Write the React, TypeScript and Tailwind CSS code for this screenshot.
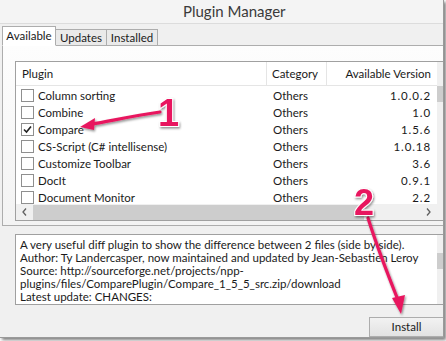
const plugins = [
  { name: "Column sorting", version: "1.0.0.2", checked: false },
  { name: "Combine", version: "1.0", checked: false },
  { name: "Compare", version: "1.5.6", checked: true },
  { name: "CS-Script (C# intellisense)", version: "1.0.18", checked: false },
  { name: "Customize Toolbar", version: "3.6", checked: false },
  { name: "DocIt", version: "0.9.1", checked: false },
  { name: "Document Monitor", version: "2.2", checked: false },
];

const font = { fontFamily: 'Lato, "Open Sans", sans-serif' };

function Checkbox({ checked }: { checked: boolean }) {
  return (
    <div className="w-[13px] h-[13px] border border-[#8f8f8f] bg-white flex items-center justify-center shrink-0">
      {checked && (
        <svg width="9" height="9" viewBox="0 0 9 9">
          <path d="M1 4.5 L3.5 7 L8 1.5" fill="none" stroke="#222" strokeWidth="1.6" />
        </svg>
      )}
    </div>
  );
}

function Annotations() {
  return (
    <svg className="absolute inset-0 pointer-events-none" width="446" height="341" viewBox="0 0 446 341">
      <defs>
        <filter id="sh" x="-20%" y="-20%" width="140%" height="140%">
          <feDropShadow dx="1" dy="1.5" stdDeviation="1.2" floodColor="#000" floodOpacity="0.45" />
        </filter>
      </defs>
      {/* arrow 1 */}
      <g filter="url(#sh)">
        <path d="M160 112 C 132 116, 110 121, 92 124" fill="none" stroke="#e8185f" strokeWidth="3.2" strokeLinecap="round" />
        <path d="M80 127 L95 118 L94 130 Z" fill="#e8185f" />
      </g>
      <text x="158" y="126" fontFamily="Liberation Sans, Arial, sans-serif" fontWeight="bold" fontSize="38" fill="#e8185f" stroke="#fff" strokeWidth="2" paintOrder="stroke" filter="url(#sh)">1</text>
      {/* arrow 2 */}
      <g filter="url(#sh)">
        <path d="M368 218 C 378 250, 390 280, 398 300" fill="none" stroke="#e8185f" strokeWidth="3.2" strokeLinecap="round" />
        <path d="M401 314 L392 298 L405 295 Z" fill="#e8185f" />
      </g>
      <text x="354" y="215" fontFamily="Liberation Sans, Arial, sans-serif" fontWeight="bold" fontSize="36" fill="#e8185f" stroke="#fff" strokeWidth="2" paintOrder="stroke" filter="url(#sh)">2</text>
    </svg>
  );
}

export default function App() {
  return (
    <div className="relative w-[446px] h-[341px] overflow-hidden bg-white" style={font}>
      <div className="w-[444px] h-[338px] bg-[#f0f0f0] border-r border-b border-[#9a9a9a] shadow-[2px_2px_3px_rgba(0,0,0,0.5)] flex flex-col text-[11.5px] text-[#1a1a1a] whitespace-nowrap">
        {/* title bar */}
        <div className="h-[24px] bg-[#f4f4f4] border-b border-[#dcdcdc] flex items-center pl-[183px] text-[15px] text-[#3a3a3a] leading-none">
          Plugin Manager
        </div>

        {/* tabs */}
        <div className="flex items-end pl-[2px] mt-[3px] h-[19px] relative z-10">
          <div className="w-[54px] h-[20px] bg-white border border-[#adadad] border-b-white flex items-center justify-center">Available</div>
          <div className="w-[51px] h-[17px] bg-[#eaeaea] border border-l-0 border-[#adadad] flex items-center justify-center">Updates</div>
          <div className="w-[51px] h-[17px] bg-[#eaeaea] border border-l-0 border-[#adadad] flex items-center justify-center">Installed</div>
        </div>

        {/* tab panel */}
        <div className="ml-[2px] -mt-px h-[181px] border border-[#adadad] border-r-0 pl-[12px] pt-[15px] bg-gradient-to-b from-[#fdfdfd] to-[#f3f3f3]">
          <div className="h-[160px] border border-[#a0a0a0] border-r-0 bg-white relative overflow-hidden">
            {/* header */}
            <div className="h-[24px] flex border-b border-[#e5e5e5] items-center">
              <div className="w-[251px] pl-[6px] border-r border-[#e5e5e5] h-full flex items-center">Plugin</div>
              <div className="w-[60px] pl-[5px] border-r border-[#e5e5e5] h-full flex items-center">Category</div>
              <div className="w-[109px] pr-[5px] h-full flex items-center justify-end">Available Version</div>
            </div>
            {/* rows */}
            <div className="flex flex-col pt-px">
              {plugins.map((p) => (
                <div key={p.name} className="h-[17px] flex items-center">
                  <div className="w-[251px] pl-[5px] flex items-center gap-[4px]">
                    <Checkbox checked={p.checked} />
                    <span>{p.name}</span>
                  </div>
                  <div className="w-[60px] pl-[6px]">Others</div>
                  <div className="w-[109px] pr-[5px] text-right tracking-[0.9px]">{p.version}</div>
                </div>
              ))}
            </div>
            {/* vertical scrollbar */}
            <div className="absolute right-0 top-0 w-[6px] h-[143px] bg-[#f0f0f0]">
              <div className="mt-[24px] h-[16px] bg-[#cdcdcd]" />
            </div>
            {/* horizontal scrollbar */}
            <div className="absolute left-0 bottom-0 w-full h-[16px] bg-[#f0f0f0] flex items-center">
              <div className="w-[17px] flex justify-center">
                <svg width="5" height="8" viewBox="0 0 5 8"><path d="M4 0.5 L1 4 L4 7.5" fill="none" stroke="#606060" strokeWidth="1.3" /></svg>
              </div>
              <div className="w-[331px] h-[15px] bg-[#cdcdcd]" />
              <div className="flex-1" />
              <div className="w-[17px] mr-[6px] flex justify-center">
                <svg width="5" height="8" viewBox="0 0 5 8"><path d="M1 0.5 L4 4 L1 7.5" fill="none" stroke="#606060" strokeWidth="1.3" /></svg>
              </div>
            </div>
          </div>
        </div>

        {/* description */}
        <div className="ml-[15px] mt-[8px] h-[71px] bg-white border border-[#a0a0a0] border-r-0 relative leading-[13px] pl-[4px] pt-[3px]">
          <div>A very useful diff plugin to show the difference between 2 files (side by side).</div>
          <div>Author: Ty Landercasper, now maintained and updated by Jean-Sebastien Leroy</div>
          <div>Source: http://sourceforge.net/projects/npp-</div>
          <div>plugins/files/ComparePlugin/Compare_1_5_5_src.zip/download</div>
          <div>Latest update: CHANGES:</div>
          <div className="absolute right-0 top-0 w-[6px] h-full bg-[#f0f0f0]">
            <div className="mt-[18px] h-[16px] bg-[#cdcdcd]" />
          </div>
        </div>

        {/* install button */}
        <div className="flex justify-end mt-[12px]">
          <div className="w-[74px] h-[20px] border border-[#adadad] border-r-0 bg-gradient-to-b from-[#f2f2f2] to-[#e2e2e2] flex items-center justify-center">
            Install
          </div>
        </div>
      </div>
      <Annotations />
    </div>
  );
}
